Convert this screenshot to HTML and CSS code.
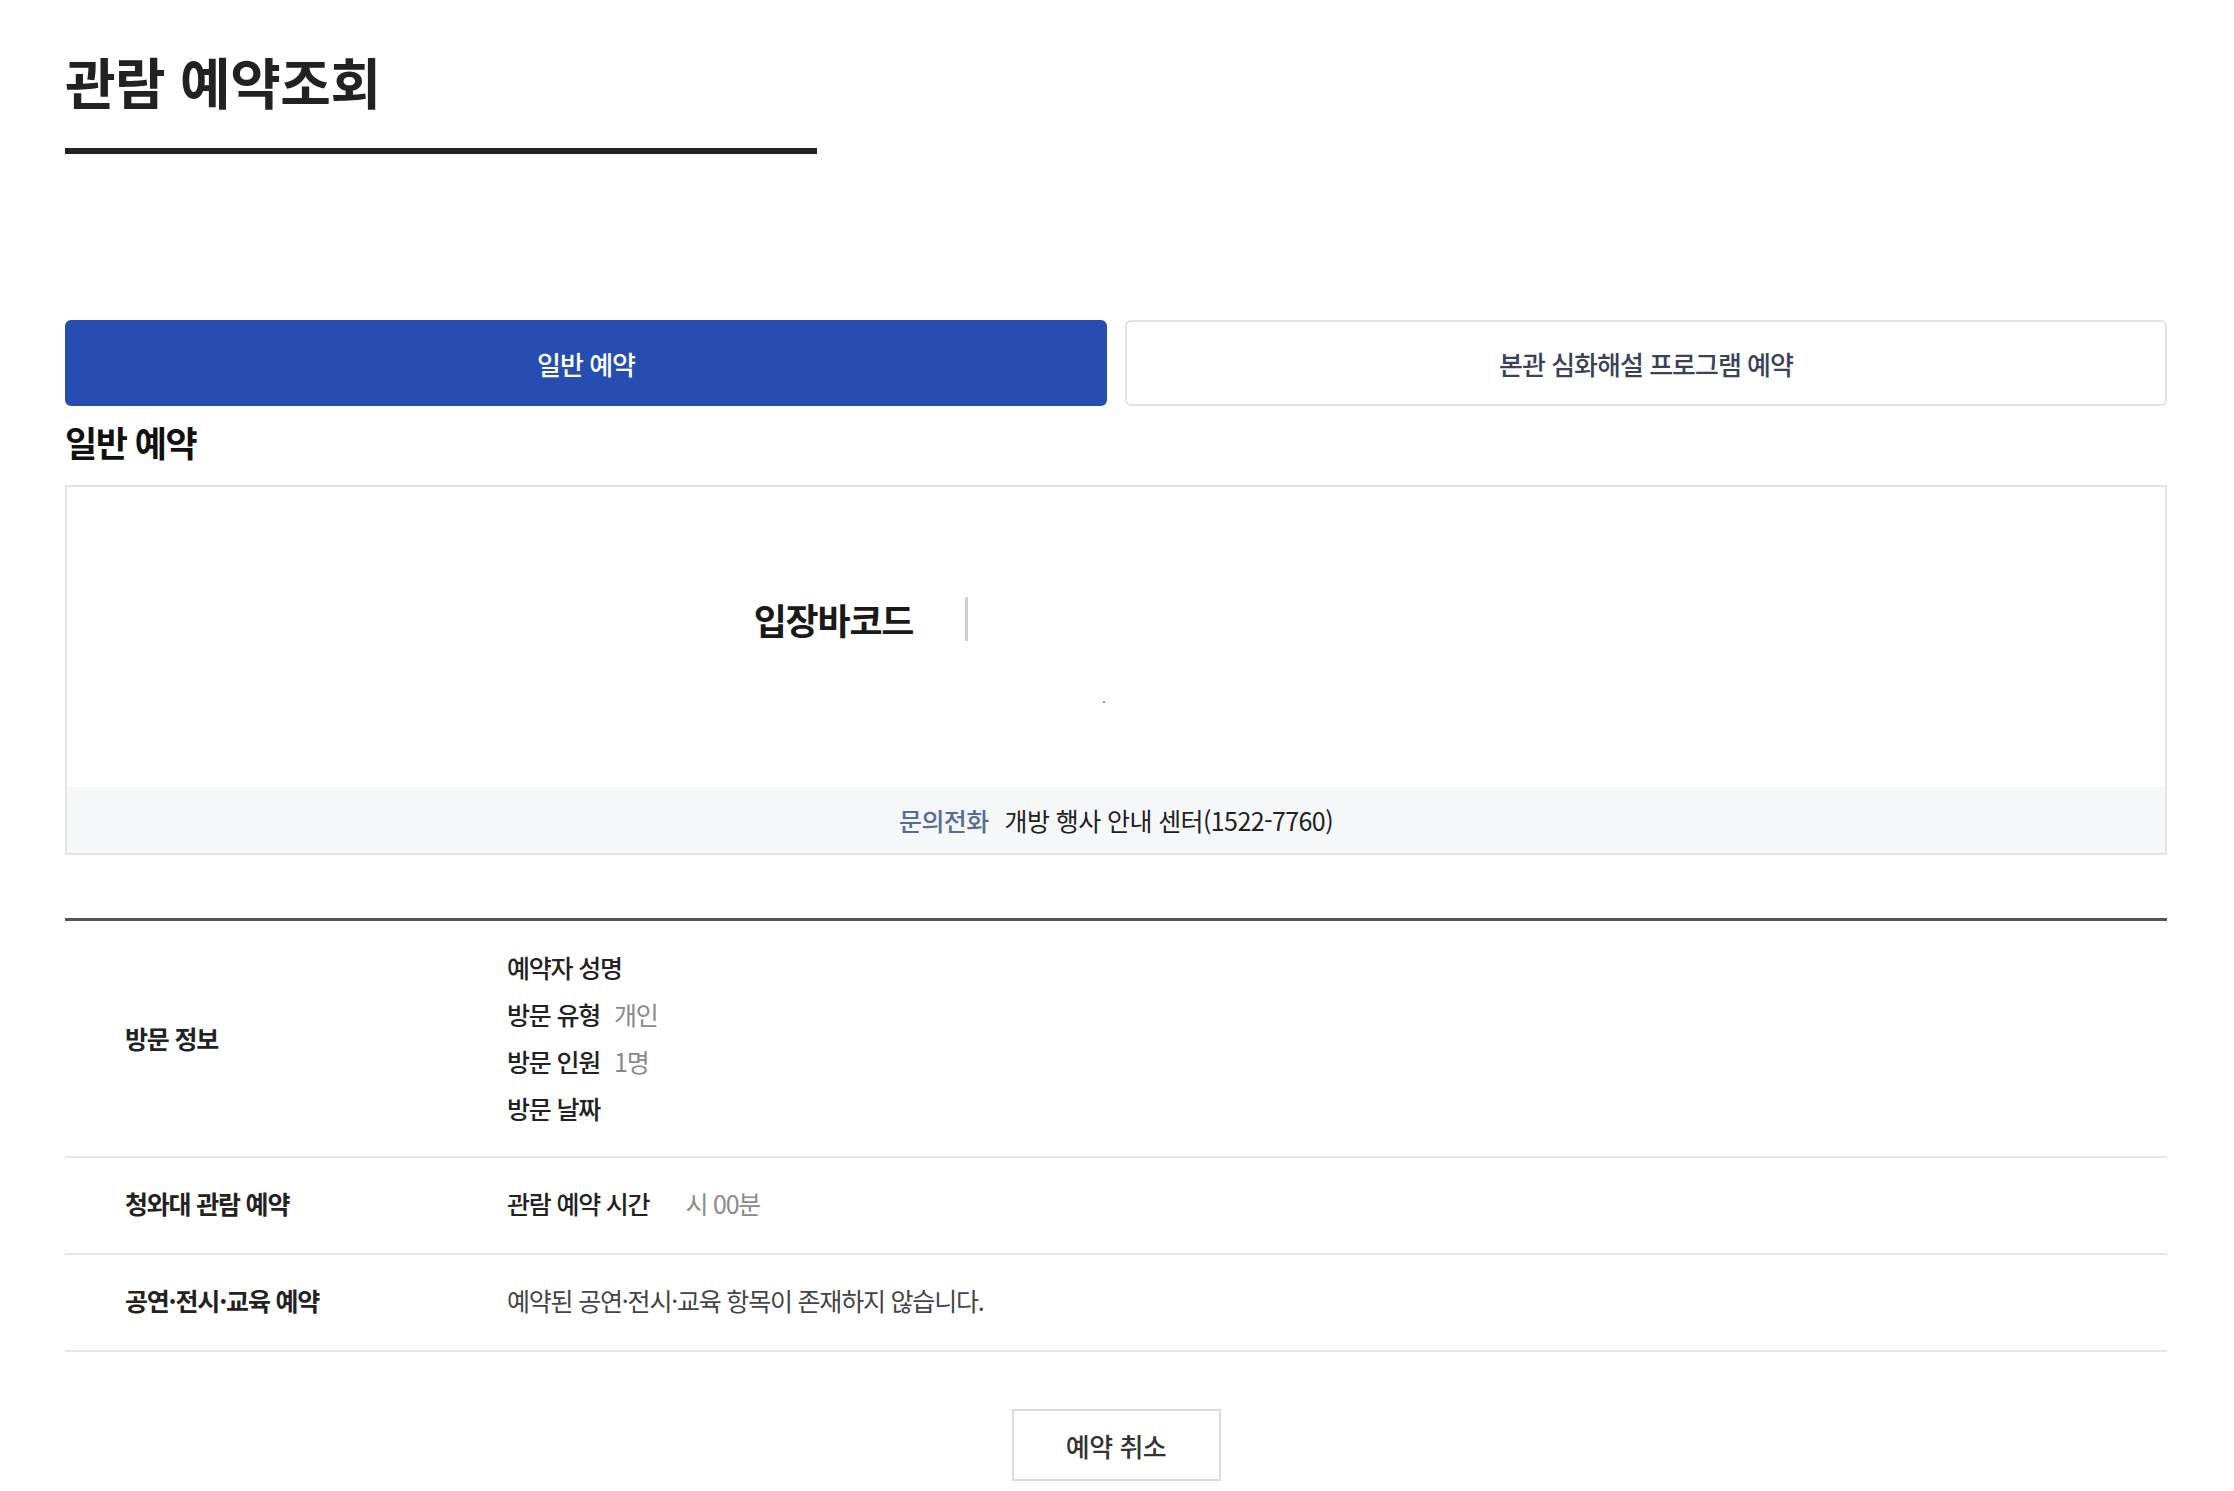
FILE: index.html
```html
<!DOCTYPE html>
<html lang="ko">
<head>
<meta charset="utf-8">
<title>관람 예약조회</title>
<link rel="stylesheet" href="styles.css">
</head>
<body>
<div class="wrap">
  <h1 class="page-title">관람 예약조회</h1>

  <div class="tabs">
    <button class="tab tab-active">일반 예약</button>
    <button class="tab">본관 심화해설 프로그램 예약</button>
  </div>

  <h2 class="section-title">일반 예약</h2>

  <div class="barcode-panel">
    <div class="barcode-body">
      <div class="barcode-row">
        <strong class="barcode-label">입장바코드</strong>
        <span class="barcode-sep"></span>
        <div class="barcode-img"><span class="barcode-dot"></span></div>
      </div>
    </div>
    <div class="barcode-foot">
      <span class="foot-key">문의전화</span>
      <span class="foot-val">개방 행사 안내 센터(1522-7760)</span>
    </div>
  </div>

  <div class="info-table">
    <div class="info-row info-row-tall">
      <div class="info-head">방문 정보</div>
      <ul class="info-list">
        <li><span class="k">예약자 성명</span><span class="v"></span></li>
        <li><span class="k">방문 유형</span><span class="v">개인</span></li>
        <li><span class="k">방문 인원</span><span class="v">1명</span></li>
        <li><span class="k">방문 날짜</span><span class="v"></span></li>
      </ul>
    </div>
    <div class="info-row">
      <div class="info-head">청와대 관람 예약</div>
      <div class="info-cell"><span class="k">관람 예약 시간</span><span class="v v-wide">시 00분</span></div>
    </div>
    <div class="info-row">
      <div class="info-head">공연·전시·교육 예약</div>
      <div class="info-cell"><span class="plain">예약된 공연·전시·교육 항목이 존재하지 않습니다.</span></div>
    </div>
  </div>

  <div class="actions">
    <button class="btn-cancel">예약 취소</button>
  </div>
</div>
</body>
</html>
```

FILE: styles.css
```css
* { box-sizing: border-box; }
html, body { margin: 0; padding: 0; background: #fff; }
body {
  font-family: "Noto Sans CJK KR", "Noto Sans", sans-serif;
  color: #222;
}
.wrap {
  width: 2102px;
  margin-left: 65px;
  padding-top: 38px;
}
.page-title {
  margin: 0;
  width: 752px;
  font-size: 55px;
  font-weight: 700;
  line-height: 84px;
  letter-spacing: -0.5px;
  color: #222;
  padding-bottom: 26px;
  border-bottom: 6px solid #222;
}
.tabs {
  display: flex;
  gap: 18px;
  margin-top: 166px;
}
.tab {
  flex: 1;
  height: 86px;
  border: 2px solid #e2e2e2;
  border-radius: 6px;
  background: #fff;
  font-family: inherit;
  font-size: 26px;
  font-weight: 500;
  letter-spacing: -1px;
  color: #3b4257;
  padding: 0;
}
.tab-active {
  background: #264db1;
  border-color: #264db1;
  color: #fff;
}
.section-title {
  margin: 10px 0 0;
  font-size: 35px;
  font-weight: 700;
  line-height: 52px;
  letter-spacing: -1.5px;
  color: #111;
}
.barcode-panel {
  margin-top: 17px;
  border: 2px solid #e4e4e4;
}
.barcode-body {
  height: 300px;
  padding-top: 110px;
}
.barcode-row {
  display: flex;
  justify-content: center;
  align-items: flex-start;
}
.barcode-label {
  font-size: 36px;
  font-weight: 700;
  line-height: 44px;
  letter-spacing: -1.2px;
  color: #1a1a1a;
  margin-right: 52px;
}
.barcode-sep {
  width: 3px;
  height: 44px;
  background: #d0d0d0;
}
.barcode-img {
  width: 510px;
  height: 110px;
  position: relative;
}
.barcode-dot {
  position: absolute;
  left: 135px;
  top: 104px;
  width: 2px;
  height: 2px;
  background: #999;
}
.barcode-foot {
  height: 66px;
  background: #f6f7f9;
  display: flex;
  justify-content: center;
  align-items: center;
  gap: 16px;
  font-size: 25px;
  letter-spacing: -0.6px;
}
.foot-key { color: #5b6b99; font-weight: 500; }
.foot-val { color: #222; }
.info-table {
  margin-top: 63px;
  border-top: 3px solid #555;
}
.info-row {
  display: flex;
  align-items: center;
  min-height: 97px;
  padding-bottom: 6px;
  border-bottom: 2px solid #e6e6e6;
}
.info-row-tall {
  padding: 23px 0 24px;
}
.info-head {
  width: 442px;
  padding-left: 60px;
  font-size: 25px;
  font-weight: 700;
  letter-spacing: -1.2px;
  color: #222;
}
.info-list {
  list-style: none;
  margin: 0;
  padding: 0;
}
.info-list li {
  line-height: 47px;
  height: 47px;
  display: flex;
}
.k {
  font-size: 25px;
  font-weight: 500;
  letter-spacing: -1.2px;
  color: #222;
}
.v {
  font-size: 25px;
  letter-spacing: -1.2px;
  color: #8a8a8a;
  margin-left: 14px;
}
.v-wide { margin-left: 36px; }
.info-cell { display: flex; }
.plain {
  font-size: 25px;
  letter-spacing: -1.2px;
  color: #444;
}
.actions {
  display: flex;
  justify-content: center;
  margin-top: 57px;
}
.btn-cancel {
  width: 209px;
  height: 72px;
  border: 2px solid #dcdcdc;
  background: #fff;
  font-family: inherit;
  font-size: 26px;
  font-weight: 500;
  letter-spacing: -0.5px;
  color: #333;
  padding: 0;
}
```
